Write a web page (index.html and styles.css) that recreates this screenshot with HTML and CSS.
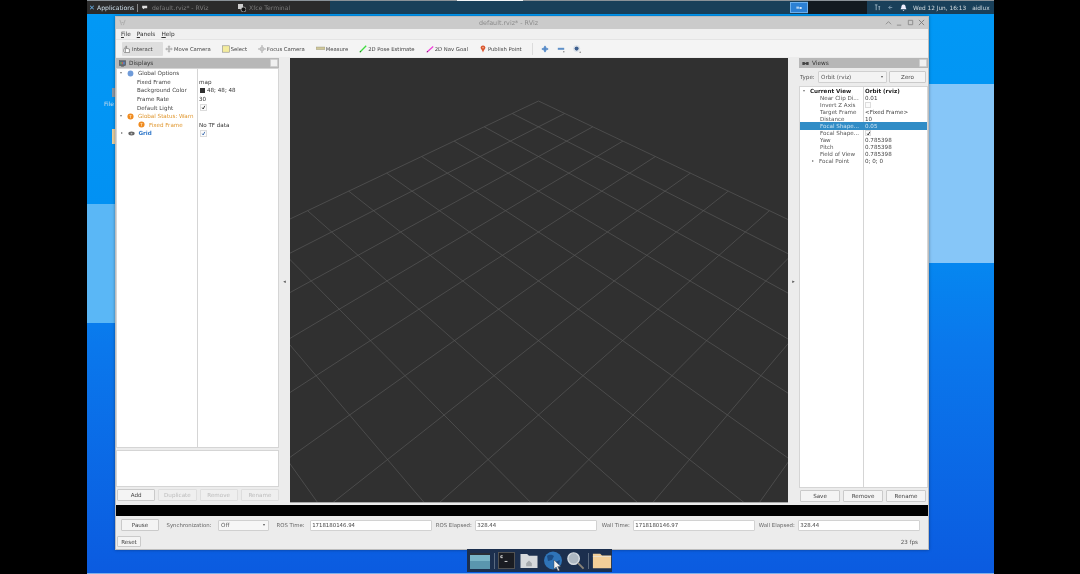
FILE: index.html
```html
<!DOCTYPE html>
<html lang="en">
<head>
<meta charset="utf-8">
<title>default.rviz* - RViz</title>
<link rel="stylesheet" href="styles.css">
</head>
<body>
<div class="screen">
  <div class="desktop">
    <div class="band band-left"></div>
    <div class="band band-right"></div>
    <div class="desk-icon-a"></div>
    <div class="desk-label">File</div>
    <div class="desk-icon-b"></div>

    <header class="panel">
      <div class="tasks">
        <span class="app-x">✕</span><span class="app-name">Applications</span><span class="app-sep"></span>
        <span class="task task-one"><svg class="task-ico" viewBox="0 0 8 6"><path d="M0 1h6v3H3L1 5V4H0z" fill="#ddd"/></svg>default.rviz* - RViz</span>
        <span class="task task-two"><svg class="task-ico-b" viewBox="0 0 8 8"><rect x="0" y="0" width="5" height="5" fill="#ccc"/><circle cx="5.5" cy="5.5" r="2.5" fill="#111" stroke="#ddd" stroke-width=".6"/></svg>Xfce Terminal</span>
      </div>
      <div class="panel-fill"></div>
      <div class="pager-on"><span class="pager-txt">≡▪</span></div>
      <div class="pager-off"></div>
      <div class="tray">
        <svg class="tray-ico" viewBox="0 0 8 8"><path d="M1 1h3M2.500 1v6M5 3h2M6 3v4" stroke="#9db4c4" fill="none"/></svg>
        <svg class="tray-ico" viewBox="0 0 8 8"><path d="M6 4H2M4 2 2 4l2 2" stroke="#7f9bb0" fill="none"/></svg>
        <svg class="tray-ico" viewBox="0 0 8 8"><path d="M4 .5c-2 0-2.500 2-2.500 3.500L.6 6h6.800l-.9-2C6.500 2.500 6 .5 4 .5zM3 6.800h2L4 8z" fill="#eef"/></svg>
        <span class="clock">Wed 12 Jun, 16:13</span>
        <span class="user">aidlux</span>
      </div>
    </header>

    <main class="window">
      <div class="titlebar">
        <svg class="win-ico" viewBox="0 0 8 8"><path d="M1 1l2 6M7 1 5 7M3 4h2" stroke="#aaa" fill="none"/></svg>
        <span class="win-title">default.rviz* - RViz</span>
        <div class="win-btns">
          <svg viewBox="0 0 8 8"><path d="M1 6l3-3 3 3" stroke="#888" fill="none"/></svg>
          <svg viewBox="0 0 8 8"><path d="M1 7h5" stroke="#888" fill="none"/></svg>
          <svg viewBox="0 0 8 8"><path d="M1.500 1.500h5v5h-5z" stroke="#888" fill="none"/></svg>
          <svg viewBox="0 0 8 8"><path d="M1 1l6 6M7 1 1 7" stroke="#777" fill="none"/></svg>
        </div>
      </div>
      <nav class="menubar"><span><u>F</u>ile</span><span><u>P</u>anels</span><span><u>H</u>elp</span></nav>
      <div class="toolbar">
        <div class="tool tool-on">
          <svg class="ti" viewBox="0 0 10 10"><path d="M3 9V4.500L2 3.500 1 6v2l1 1.500h6V5L3.500 4V1.500h1V4" fill="#fff" stroke="#555" stroke-width=".7"/></svg>Interact
        </div>
        <div class="tool">
          <svg class="ti" viewBox="0 0 10 10"><path d="M5 .5 6.500 2.500H5.700V4.300H7.500V3.500L9.500 5 7.500 6.500V5.700H5.700V7.500H6.500L5 9.500 3.500 7.500H4.300V5.700H2.500V6.500L.5 5 2.500 3.500V4.300H4.300V2.500H3.500z" fill="#b5b5b5" stroke="#999" stroke-width=".3"/></svg>Move Camera
        </div>
        <div class="tool">
          <svg class="ti" viewBox="0 0 10 10"><rect x=".5" y="1" width="9" height="8" fill="#f4ec9e" stroke="#888" stroke-width=".7"/></svg>Select
        </div>
        <div class="tool">
          <svg class="ti" viewBox="0 0 10 10"><path d="M5 0v10M0 5h10" stroke="#aaa" stroke-width="1.200"/><circle cx="5" cy="5" r="2.600" fill="#c8c8c8" stroke="#aaa" stroke-width=".6"/></svg>Focus Camera
        </div>
        <div class="tool">
          <svg class="ti ti-wide" viewBox="0 0 12 6"><rect x="0" y="1" width="12" height="3.500" fill="#cfc79a" stroke="#8d8a70" stroke-width=".5"/></svg>Measure
        </div>
        <div class="tool">
          <svg class="ti" viewBox="0 0 10 10"><path d="M1 9 9 1" stroke="#3fdc3f" stroke-width="1.600"/><path d="M1 9l1.500-.5-1-1z" fill="#222"/></svg>2D Pose Estimate
        </div>
        <div class="tool">
          <svg class="ti" viewBox="0 0 10 10"><path d="M1 9 9 2" stroke="#ef3fd8" stroke-width="1.600"/><path d="M1 9l1.500-.5-1-1z" fill="#222"/></svg>2D Nav Goal
        </div>
        <div class="tool">
          <svg class="ti" viewBox="0 0 10 10"><path d="M5 .5c-2 0-3 1.500-3 3 0 1.500 2 2.500 3 6 1-3.500 3-4.500 3-6 0-1.500-1-3-3-3z" fill="#d9532c"/><circle cx="5" cy="3.300" r="1" fill="#f1b38d"/></svg>Publish Point
        </div>
        <span class="tool-sep"></span>
        <svg class="ti-sq" viewBox="0 0 10 10"><path d="M5 .5 7 3H6v1h1V3l2.500 2L7 7V6H6v1h1L5 9.500 3 7h1V6H3v1L.5 5 3 3v1h1V3H3z" fill="#4f86c6"/></svg>
        <svg class="ti-sq" viewBox="0 0 10 10"><rect x="1" y="3.500" width="8" height="2.500" fill="#5f90c8"/><circle cx="8.500" cy="8.500" r="1" fill="#888"/></svg>
        <svg class="ti-sq" viewBox="0 0 10 10"><circle cx="4.500" cy="4.500" r="2.600" fill="#3e5f8f"/><circle cx="4.500" cy="4.500" r="3.800" fill="none" stroke="#bcc8d8" stroke-width=".6"/><circle cx="9" cy="9" r="1" fill="#888"/></svg>
      </div>

      <div class="workarea">
        <aside class="dock dock-left">
          <div class="dock-head"><svg class="head-ico" viewBox="0 0 10 10"><rect x=".5" y="1" width="9" height="7" fill="#5a6a7a" stroke="#444" stroke-width=".6"/><path d="M2 3h2v3H2z" fill="#6fae5a"/><path d="M4 3h2v3H4z" fill="#c95a5a"/><path d="M6 3h2v3H6z" fill="#5a86c9"/><path d="M3 9h4" stroke="#555"/></svg><span>Displays</span><i class="float-btn"></i></div>
          <div class="tree tree-displays">
            <div class="row"><span class="name"><span class="arrow arrow-down"></span><svg class="ro" viewBox="0 0 8 8"><circle cx="4" cy="4" r="3.300" fill="#6f9bd9"/></svg>Global Options</span><span class="val"></span></div>
            <div class="row"><span class="name sub">Fixed Frame</span><span class="val">map</span></div>
            <div class="row"><span class="name sub">Background Color</span><span class="val"><i class="swatch"></i>48; 48; 48</span></div>
            <div class="row"><span class="name sub">Frame Rate</span><span class="val">30</span></div>
            <div class="row"><span class="name sub">Default Light</span><span class="val"><span class="check"><svg viewBox="0 0 6 6"><path d="M1.500 3.200 2.600 4.800 4.600 1" stroke="#222" fill="none"/></svg></span></span></div>
            <div class="row warn"><span class="name"><span class="arrow arrow-down"></span><svg class="ro" viewBox="0 0 8 8"><circle cx="4" cy="4" r="3.500" fill="#ef8a1f"/><path d="M2.800 2.800h2.400M4 2.800V6" stroke="#ffe0b0" stroke-width=".8"/></svg>Global Status: Warn</span><span class="val"></span></div>
            <div class="row"><span class="name warn warn-sub"><svg class="ro" viewBox="0 0 8 8"><circle cx="4" cy="4" r="3.500" fill="#ef8a1f"/><path d="M2.800 2.800h2.400M4 2.800V6" stroke="#ffe0b0" stroke-width=".8"/></svg>Fixed Frame</span><span class="val">No TF data</span></div>
            <div class="row"><span class="name grid-name"><span class="arrow arrow-right"></span><svg class="ro" viewBox="0 0 8 8"><ellipse cx="4" cy="4" rx="3.600" ry="2.200" fill="#666"/><circle cx="4" cy="4" r="1" fill="#bbb"/></svg>Grid</span><span class="val"><span class="check"><svg viewBox="0 0 6 6"><path d="M1.500 3.200 2.600 4.800 4.600 1" stroke="#2a5fa8" fill="none"/></svg></span></span></div>
          </div>
          <div class="help-box"></div>
          <div class="btn-row btn-row-left">
            <button class="btn">Add</button>
            <button class="btn btn-off">Duplicate</button>
            <button class="btn btn-off">Remove</button>
            <button class="btn btn-off">Rename</button>
          </div>
        </aside>

        <div class="split"><span class="split-arrow">◂</span></div>

        <section class="render">
          <svg class="grid3d" viewBox="290 58 498 445" preserveAspectRatio="none">
            <path class="gl" d="M538.500 101L159.700 280.900M564.700 113.500L179.800 309.200M592.800 126.800L202.200 340.600M622.900 141.100L227.200 375.600M655.400 156.500L255.200 415M690.400 173.100L286.900 459.500M728.300 191.100L323.100 510.300M769.400 210.700L364.700 568.700M814.300 232L413.200 636.800M863.400 255.300L470.300 716.900M917.300 280.900L538.500 812.600"/>
            <path class="gl" d="M538.500 101L917.300 280.900M512.300 113.500L897.200 309.200M484.200 126.800L874.800 340.600M454.100 141.100L849.800 375.600M421.600 156.500L821.800 415M386.600 173.100L790.100 459.500M348.700 191.100L753.900 510.300M307.600 210.700L712.300 568.700M262.700 232L663.800 636.800M213.600 255.300L606.700 716.900M159.700 280.900L538.500 812.600"/>
          </svg>
        </section>

        <div class="split"><span class="split-arrow">▸</span></div>

        <aside class="dock dock-right">
          <div class="dock-head"><svg class="head-ico" viewBox="0 0 10 10"><path d="M.5 3h3.500v4H.5zM6 3h3.500v4H6zM4 4h2v2H4z" fill="#444"/></svg><span>Views</span><i class="float-btn"></i></div>
          <div class="type-row">
            <span>Type:</span>
            <div class="combo combo-type"><span>Orbit (rviz)</span><i class="combo-arrow"></i></div>
            <button class="btn btn-zero">Zero</button>
          </div>
          <div class="tree tree-views">
            <div class="vrow vhead"><span class="vname"><span class="arrow arrow-down"></span>Current View</span><span class="vval">Orbit (rviz)</span></div>
            <div class="vrow"><span class="vname vsub">Near Clip Di...</span><span class="vval">0.01</span></div>
            <div class="vrow"><span class="vname vsub">Invert Z Axis</span><span class="vval"><span class="check"></span></span></div>
            <div class="vrow"><span class="vname vsub">Target Frame</span><span class="vval">&lt;Fixed Frame&gt;</span></div>
            <div class="vrow"><span class="vname vsub">Distance</span><span class="vval">10</span></div>
            <div class="vrow vsel"><span class="vname vsub">Focal Shape...</span><span class="vval">0.05</span></div>
            <div class="vrow"><span class="vname vsub">Focal Shape...</span><span class="vval"><span class="check"><svg viewBox="0 0 6 6"><path d="M1.500 3.200 2.600 4.800 4.600 1" stroke="#222" fill="none"/></svg></span></span></div>
            <div class="vrow"><span class="vname vsub">Yaw</span><span class="vval">0.785398</span></div>
            <div class="vrow"><span class="vname vsub">Pitch</span><span class="vval">0.785398</span></div>
            <div class="vrow"><span class="vname vsub">Field of View</span><span class="vval">0.785398</span></div>
            <div class="vrow"><span class="vname vsub"><span class="arrow arrow-right arrow-in"></span>Focal Point</span><span class="vval">0; 0; 0</span></div>
          </div>
          <div class="btn-row btn-row-right">
            <button class="btn">Save</button>
            <button class="btn">Remove</button>
            <button class="btn">Rename</button>
          </div>
        </aside>
      </div>

      <div class="blackbar"></div>

      <div class="timepanel">
        <div class="time-row">
          <button class="btn btn-pause">Pause</button>
          <span class="tl tl-sync">Synchronization:</span>
          <div class="combo combo-sync"><span>Off</span><i class="combo-arrow"></i></div>
          <span class="tl tl-ros">ROS Time:</span>
          <div class="input">1718180146.94</div>
          <span class="tl">ROS Elapsed:</span>
          <div class="input">328.44</div>
          <span class="tl tl-wall">Wall Time:</span>
          <div class="input">1718180146.97</div>
          <span class="tl">Wall Elapsed:</span>
          <div class="input">328.44</div>
        </div>
        <div class="reset-row">
          <button class="btn btn-reset">Reset</button>
          <span class="fps">23 fps</span>
        </div>
      </div>
    </main>

    <div class="dockbar">
      <svg class="dk dk-win" viewBox="0 0 22 18"><rect x="1" y="1" width="20" height="16" fill="#5a96ae"/><rect x="1" y="1" width="20" height="2" fill="#2a2f36"/><path d="M1 3h20v6H1z" fill="#79b4c6"/></svg>
      <span class="dk-sep"></span>
      <svg class="dk dk-term" viewBox="0 0 18 18"><rect x=".5" y=".5" width="17" height="17" fill="#1a1c22" stroke="#555"/><path d="M3 4h2M3 6h2M3 4v2M7 10h3" stroke="#ddd"/></svg>
      <svg class="dk dk-home" viewBox="0 0 20 18"><path d="M1 2h7l2 2h9v13H1z" fill="#d6d9dc"/><path d="M7 12l3-3 3 3v3H7z" fill="#a5a9ad"/></svg>
      <svg class="dk dk-globe" viewBox="0 0 20 20"><circle cx="10" cy="9.500" r="9" fill="#2f74b8"/><path d="M4 5c3-2 5-1 7 0l-2 4-4 1zM12 11l5-2-1 5-3 2z" fill="#1b4c85"/><path d="M11 9v9l2.200-2 1.800 4 1.500-.7-1.800-3.800h3z" fill="#f2f2f2" stroke="#333" stroke-width=".4"/></svg>
      <svg class="dk dk-lens" viewBox="0 0 20 20"><circle cx="8" cy="8" r="6" fill="#aeb8c2" stroke="#d8dde2" stroke-width="1.500"/><path d="M12.500 12.500l6 6" stroke="#8a8478" stroke-width="2"/></svg>
      <span class="dk-sep"></span>
      <svg class="dk dk-folder" viewBox="0 0 22 18"><path d="M1 1h8l2 2h10v14H1z" fill="#f3cf98"/><path d="M1 4h20" stroke="#e9e0d0"/></svg>
    </div>

    <div class="bottom-edge"></div>
    <div class="top-glint"></div>
  </div>
</div>
</body>
</html>
```

FILE: styles.css
```css
* { box-sizing: border-box; }
html, body { margin: 0; height: 100%; background: #000; overflow: hidden; }
body { font-family: "DejaVu Sans", sans-serif; font-size: 5.6px; color: #333; }
button { font: inherit; color: inherit; margin: 0; padding: 0; }

.screen { width: 1080px; height: 574px; background: #000; filter: blur(0.55px); overflow: hidden; }
.desktop {
  position: relative; margin-left: 87px; width: 907px; height: 574px; overflow: hidden;
  background: linear-gradient(180deg, #0299f5 0%, #0291f3 36%, #0a78ec 60%, #0b5be0 100%);
}
.band { position: absolute; }
.band-left { left: 0; top: 204px; width: 30px; height: 119px; background: #5ab7f6; }
.band-right { right: 0; top: 84px; width: 66px; height: 179px; background: #86c6f8; }
.desk-icon-a { position: absolute; left: 25px; top: 88px; width: 4px; height: 9px; background: #8a97a4; }
.desk-label { position: absolute; left: 17px; top: 100px; color: #c9dcec; font-size: 6px; }
.desk-icon-b { position: absolute; left: 25px; top: 129px; width: 4px; height: 15px; background: #e8cfa0; }
.bottom-edge { position: absolute; left: 0; right: 0; bottom: 0; height: 1px; background: #7fb0e8; }
.top-glint { position: absolute; left: 370px; top: 0; width: 66px; height: 1px; background: #f4f6f8; }

/* top panel */
.panel { display: flex; height: 14px; background: #19405a; border-top: 1px solid #8a9298; color: #cfd8de; font-size: 6.1px; align-items: stretch; }
.tasks { display: flex; align-items: center; width: 243px; background: #2b2b2b; }
.app-x { width: 8px; margin-left: 2px; color: #6ab2e8; font-size: 7px; font-weight: bold; }
.app-name { width: 40px; color: #cfe0ec; white-space: nowrap; }
.app-sep { width: 1px; height: 8px; background: #888; margin-right: 4px; }
.task { display: flex; align-items: center; gap: 3px; color: #7d7d7d; white-space: nowrap; }
.task-one { width: 96px; }
.task-two { width: 80px; }
.task-ico { width: 7px; height: 5px; }
.task-ico-b { width: 8px; height: 8px; }
.panel-fill { flex: 1; }
.pager-on { width: 18px; margin: 1px 0; background: #2c80d4; border: 1px solid #6fb0ec; display: flex; align-items: center; justify-content: center; }
.pager-txt { font-size: 4px; color: #d8e8f8; }
.pager-off { width: 59px; background: #121a20; }
.tray { display: flex; align-items: center; width: 127px; padding-left: 7px; color: #d5dde2; white-space: nowrap; font-size: 5.8px; }
.tray-ico { width: 7px; height: 7px; margin-right: 6px; }
.user { margin-left: 6px; }

/* window */
.window {
  position: absolute; left: 28px; top: 16px; width: 814px; height: 534px;
  display: flex; flex-direction: column; background: #ececec;
  border: 1px solid #bdbdbd; box-shadow: 0 0 3px rgba(0,0,0,.35);
}
.titlebar { position: relative; flex: none; height: 12px; background: #cbcbcb; display: flex; align-items: center; justify-content: center; }
.win-ico { position: absolute; left: 3px; top: 2px; width: 7px; height: 7px; }
.win-title { color: #8b8b8b; font-size: 6.4px; margin-left: -27px; }
.win-btns { position: absolute; right: 3px; top: 2px; display: flex; gap: 4px; }
.win-btns svg { width: 7px; height: 7px; }
.menubar { flex: none; height: 10px; background: #f0f0f0; display: flex; align-items: center; gap: 6px; padding-left: 5px; font-size: 5.8px; }
.menubar u { text-decoration: underline; text-underline-offset: 1px; }
.toolbar { flex: none; height: 18px; background: #f4f4f4; display: flex; align-items: center; gap: 11px; padding-left: 6px; border-top: 1px solid #e4e4e4; font-size: 5.3px; color: #444; white-space: nowrap; }
.tool { display: flex; align-items: center; gap: 1px; }
.tool-on { height: 14px; width: 41px; background: #dedede; border-radius: 1px; margin-right: -9px; padding-left: 1px; }
.ti { width: 8px; height: 8px; flex: none; }
.ti-wide { width: 9px; height: 5px; }
.tool-sep { width: 1px; height: 12px; background: #dcdcdc; margin-left: -1px; margin-right: -3px; }
.ti-sq { width: 8px; height: 8px; flex: none; margin-right: -3px; }

.workarea { flex: none; height: 446px; display: flex; padding-top: 1px; }
.dock { display: flex; flex-direction: column; }
.dock-left { width: 163px; }
.dock-right { width: 129px; }
.dock-head { flex: none; height: 10px; background: #b7b7b7; display: flex; align-items: center; padding-left: 3px; gap: 3px; font-size: 5.8px; color: #333; }
.head-ico { width: 7px; height: 7px; }
.float-btn { margin-left: auto; margin-right: 1px; width: 8px; height: 8px; background: #f0f0f0; border: 1px solid #cfcfcf; border-radius: 1px; }
.split { flex: none; width: 11px; display: flex; align-items: center; justify-content: center; color: #555; font-size: 5px; }
.split-arrow { display: block; }
.render { flex: none; width: 498px; height: 445px; background: #303030; border: 1px solid #a8a8a8; border-width: 0 0 1px 0; overflow: hidden; }
.grid3d { display: block; width: 498px; height: 445px; }
.gl { fill: none; stroke: #565656; stroke-width: .72; }

.tree { background: #fff; border: 1px solid #d5d5d5; position: relative; }
.tree-displays { flex: none; height: 380px; padding-top: 0; background: linear-gradient(#d5d5d5,#d5d5d5) 80px 0 / 1px 100% no-repeat #fff; font-size: 5.6px; }
.row { display: flex; height: 8.58px; align-items: center; white-space: nowrap; }
.name { width: 81px; display: flex; align-items: center; padding-left: 3px; color: #444; }
.sub { padding-left: 20px; }
.val { padding-left: 1px; display: flex; align-items: center; color: #333; }
.arrow { display: inline-block; width: 0; height: 0; margin-right: 5px; flex: none; }
.arrow-down { border-left: 1.500px solid transparent; border-right: 1.500px solid transparent; border-top: 2.500px solid #777; }
.arrow-right { border-top: 1.500px solid transparent; border-bottom: 1.500px solid transparent; border-left: 2.500px solid #777; margin-left: .5px; }
.arrow-in { margin-left: -8px; margin-right: 5px; }
.ro { width: 7px; height: 7px; margin-right: 4px; flex: none; }
.warn, .warn .name { color: #e0972f; }
.warn-sub { padding-left: 21px; }
.grid-name { color: #2f77c9; font-weight: bold; }
.swatch { width: 5px; height: 5px; background: #303030; margin: 0 2px 0 1px; }
.check { display: inline-block; width: 6.500px; height: 6.500px; border: 1px solid #dcdcdc; background: #fbfbfb; margin-left: 1px; }
.check svg { display: block; width: 5px; height: 5px; }
.help-box { flex: none; height: 37px; margin-top: 2px; background: #fff; border: 1px solid #d5d5d5; }
.btn-row { display: flex; flex: none; }
.btn-row-left { height: 12px; margin-top: 2px; gap: 3px; padding-left: 1px; }
.btn-row-left .btn { width: 38.500px; }
.btn { height: 100%; background: #f4f4f4; border: 1px solid #cacaca; border-radius: 1px; color: #444; font-size: 5.6px; }
.btn-off { color: #bcbcbc; border-color: #dedede; background: #efefef; }

.type-row { flex: none; display: flex; align-items: center; height: 14px; margin-top: 2px; color: #555; font-size: 5.6px; }
.type-row > span { width: 19px; padding-left: 1px; }
.combo { display: flex; align-items: center; background: #f3f3f3; border: 1px solid #d0d0d0; border-radius: 1px; padding-left: 2px; color: #555; }
.combo-arrow { margin-left: auto; margin-right: 3px; border-left: 1.500px solid transparent; border-right: 1.500px solid transparent; border-top: 2px solid #555; }
.combo-type { width: 69px; height: 12px; }
.btn-zero { width: 37px; height: 12px; margin-left: 2px; }
.tree-views { flex: none; height: 402px; margin-top: 2px; padding-top: 0; background: linear-gradient(#d5d5d5,#d5d5d5) 63px 0 / 1px 100% no-repeat #fff; font-size: 5.6px; }
.vrow { display: flex; height: 7.100px; align-items: center; white-space: nowrap; }
.vname { width: 65px; display: flex; align-items: center; padding-left: 3px; color: #555; }
.vsub { padding-left: 20px; }
.vval { display: flex; align-items: center; color: #444; }
.vval .check { margin-left: 0; width: 6px; height: 6px; }
.vhead .vname, .vhead .vval { font-weight: bold; color: #222; }
.vsel { background: #308cc6; }
.vsel .vname, .vsel .vval { color: #c9e2f2; }
.btn-row-right { height: 12px; margin-top: 2px; gap: 3px; padding-left: 1px; }
.btn-row-right .btn { width: 40px; }

.blackbar { flex: none; height: 11px; margin-top: 2px; background: #000; }
.timepanel { flex: 1; display: flex; flex-direction: column; padding-top: 3px; }
.time-row { display: flex; align-items: center; height: 12px; padding-left: 5px; gap: 3.500px; }
.btn-pause { width: 38px; margin-right: 4px; }
.tl { color: #666; white-space: nowrap; font-size: 5.400px; }
.tl-sync { width: 48px; }
.tl-ros { margin-right: 2px; }
.tl-wall { margin-left: 1px; }
.combo-sync { width: 51px; height: 11px; margin-right: 4px; background: #f6f6f6; }
.input { width: 122px; height: 11px; background: #fff; border: 1px solid #d2d2d2; border-radius: 1px; padding-left: 1px; line-height: 8px; color: #444; font-size: 5.400px; }
.reset-row { display: flex; align-items: center; height: 11px; margin-top: 5px; padding-left: 1px; padding-right: 10px; }
.btn-reset { width: 24px; }
.fps { margin-left: auto; color: #555; }

/* launcher */
.dockbar { position: absolute; left: 380px; top: 549px; width: 145px; height: 23px; background: #1c2f4e; display: flex; align-items: center; padding-left: 2px; }
.dk { flex: none; display: block; }
.dk-win { width: 22px; height: 18px; }
.dk-sep { width: 1px; height: 16px; background: #5a6a80; margin: 0 3px; }
.dk-term { width: 17px; height: 17px; margin-right: 4px; }
.dk-home { width: 20px; height: 17px; margin-right: 4px; }
.dk-globe { width: 20px; height: 20px; margin-right: 3px; }
.dk-lens { width: 19px; height: 19px; }
.dk-folder { width: 20px; height: 18px; }
```
